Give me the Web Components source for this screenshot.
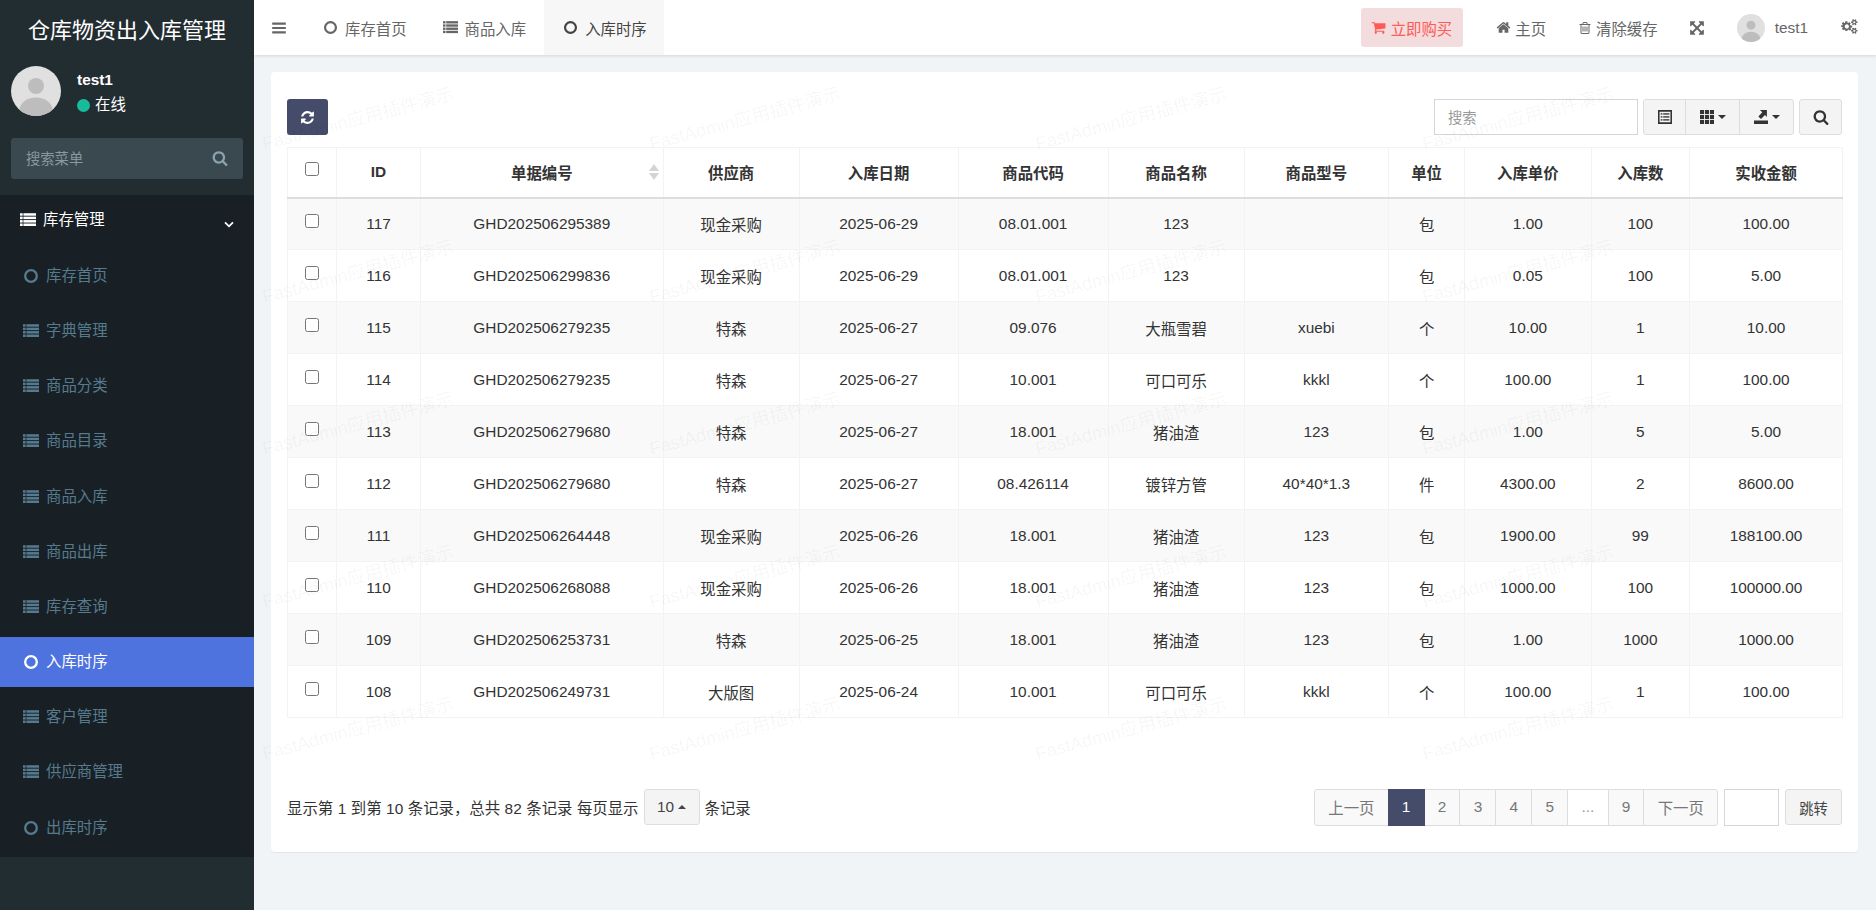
<!DOCTYPE html>
<html lang="zh-CN">
<head>
<meta charset="utf-8">
<title>仓库物资出入库管理</title>
<style>
  html, body { margin: 0; height: 100%; overflow: hidden; }
  body { font: 15.4px "Liberation Sans", "Noto Sans CJK SC", sans-serif; color: #333; background: #f1f4f6; }
</style>
</head>
<body>

<app-shell>
  <side-bar slot="side">
    <side-item icon="list" head chevron>库存管理</side-item>
    <side-item icon="circle">库存首页</side-item>
    <side-item icon="list">字典管理</side-item>
    <side-item icon="list">商品分类</side-item>
    <side-item icon="list">商品目录</side-item>
    <side-item icon="list">商品入库</side-item>
    <side-item icon="list">商品出库</side-item>
    <side-item icon="list">库存查询</side-item>
    <side-item icon="circle" active>入库时序</side-item>
    <side-item icon="list">客户管理</side-item>
    <side-item icon="list">供应商管理</side-item>
    <side-item icon="circle">出库时序</side-item>
  </side-bar>
  <top-nav slot="top"></top-nav>
  <stock-card>
    <table-toolbar></table-toolbar>
    <stock-table></stock-table>
    <table-pager></table-pager>
  </stock-card>
  <water-mark slot="over"></water-mark>
</app-shell>

<script>
(function() {

  // Font Awesome 4 shapes, 1792 grid unless the entry says otherwise
  const ICONS = {
    bars: '<rect x="128" y="288" width="1536" height="240" rx="40"/><rect x="128" y="776" width="1536" height="240" rx="40"/><rect x="128" y="1264" width="1536" height="240" rx="40"/>',
    list: [256, 640, 1024, 1408].map(y => `<rect x="0" y="${y - 120}" width="300" height="280"/><rect x="380" y="${y - 120}" width="1412" height="280"/>`).join(''),
    circle: '<circle cx="896" cy="896" r="650" fill="none" stroke="currentColor" stroke-width="260"/>',
    refresh: '<path d="M1639 1056q0 5-1 7-64 268-268 434.5T892 1664q-146 0-282.5-55T366 1452l-129 129q-19 19-45 19t-45-19-19-45v-448q0-26 19-45t45-19h448q26 0 45 19t19 45-19 45l-137 137q71 66 161 102t187 36q134 0 250-65t186-179q11-17 53-117 8-23 30-23h192q13 0 22.5 9.5t9.5 22.5zm25-800v448q0 26-19 45t-45 19h-448q-26 0-45-19t-19-45 19-45l138-138q-148-137-349-137-134 0-250 65T460 628q-11 17-53 117-8 23-30 23H178q-13 0-22.5-9.5T146 736v-7q65-268 270-434.5T896 128q146 0 284 55.5T1425 340l130-129q19-19 45-19t45 19 19 45z"/>',
    search: '<path d="M1216 832q0-185-131.5-316.5T768 384 451.5 515.5 320 832t131.5 316.5T768 1280t316.5-131.5T1216 832zm512 832q0 52-38 90t-90 38q-54 0-90-38l-343-342q-179 124-399 124-143 0-273.5-55.5t-225-150-150-225T64 832t55.5-273.5 150-225 225-150T768 128t273.5 55.5 225 150 150 225T1472 832q0 220-124 399l343 343q37 37 37 90z"/>',
    cart: '<path d="M704 1536q0 52-38 90t-90 38-90-38-38-90 38-90 90-38 90 38 38 90zm896 0q0 52-38 90t-90 38-90-38-38-90 38-90 90-38 90 38 38 90zm128-1088v512q0 24-16.5 42.5T1671 1024L627 1146q13 60 13 70 0 16-24 64h920q26 0 45 19t19 45-19 45-45 19H512q-26 0-45-19t-19-45q0-11 8-31.5t16-36 21.5-40T509 1207L332 384H128q-26 0-45-19t-19-45 19-45 45-19h256q16 0 28.5 6.5T432 278t13 24.5 8 26 5.5 29.5 4.5 26h1201q26 0 45 19t19 45z"/>',
    home: '<path d="M1472 992v480q0 26-19 45t-45 19h-384v-384H768v384H384q-26 0-45-19t-19-45V992q0-1 .5-3t.5-3l575-474 575 474q1 2 1 6zm223-69l-62 74q-8 9-21 11h-3q-13 0-21-7L896 424l-692 577q-12 8-24 7-13-2-21-11l-62-74q-8-10-7-23.5t11-21.5l719-599q32-26 76-26t76 26l244 204V288q0-14 9-23t23-9h192q14 0 23 9t9 23v408l219 182q10 8 11 21.5t-7 23.5z"/>',
    trash: '<path d="M704 736v576q0 14-9 23t-23 9h-64q-14 0-23-9t-9-23V736q0-14 9-23t23-9h64q14 0 23 9t9 23zm256 0v576q0 14-9 23t-23 9h-64q-14 0-23-9t-9-23V736q0-14 9-23t23-9h64q14 0 23 9t9 23zm256 0v576q0 14-9 23t-23 9h-64q-14 0-23-9t-9-23V736q0-14 9-23t23-9h64q14 0 23 9t9 23zm128 724V512H448v948q0 22 7 40.5t14.5 27 10.5 8.5h832q3 0 10.5-8.5t14.5-27 7-40.5zM672 384h448l-48-117q-7-9-17-11H738q-10 2-17 11zm928 32v64q0 14-9 23t-23 9h-96v948q0 83-47 143.5t-113 60.5H480q-66 0-113-58.5T320 1464V512h-96q-14 0-23-9t-9-23v-64q0-14 9-23t23-9h309l70-167q15-37 54-63t79-26h320q40 0 79 26t54 63l70 167h309q14 0 23 9t9 23z"/>',
    expand: '<path d="M1411 541l-355 355 355 355 144-144q29-31 70-14 39 17 39 59v448q0 26-19 45t-45 19h-448q-42 0-59-40-17-39 14-69l144-144-355-355-355 355 144 144q31 30 14 69-17 40-59 40H192q-26 0-45-19t-19-45v-448q0-42 40-59 39-17 69 14l144 144 355-355-355-355-144 144q-19 19-45 19-12 0-24-5-40-17-40-59V192q0-26 19-45t45-19h448q42 0 59 40 17 39-14 69L541 381l355 355 355-355-144-144q-31-30-14-69 17-40 59-40h448q26 0 45 19t19 45v448q0 42-39 59-13 5-25 5-26 0-45-19z"/>',
    cogs: '<path transform="scale(.875)" d="M960 896q0-106-75-181t-181-75-181 75-75 181 75 181 181 75 181-75 75-181zm768 512q0-52-38-90t-90-38-90 38-38 90q0 53 37.5 90.5T1600 1536t90.5-37.5T1728 1408zm0-1024q0-52-38-90t-90-38-90 38-38 90q0 53 37.5 90.5T1600 512t90.5-37.5T1728 384zm-384 421v185q0 10-7 19.5t-16 10.5l-155 24q-11 35-32 76 34 48 90 115 7 11 7 20 0 12-7 19-23 30-82.5 89.5T1004 1347q-11 0-21-7l-115-90q-37 19-77 31-11 108-23 155-7 24-30 24H552q-11 0-20-7.5t-10-17.5l-23-153q-34-10-75-31l-118 89q-7 7-20 7-11 0-21-8-144-133-144-160 0-9 7-19 10-14 41-53t47-61q-23-44-35-82l-152-24q-10-1-17-9.5T0 990V805q0-10 7-19.5T23 775l155-24q11-35 32-76-34-48-90-115-7-11-7-20 0-12 7-20 22-30 82-89t79-59q11 0 21 7l115 90q34-18 77-32 11-108 23-154 7-24 30-24h186q11 0 20 7.5t10 17.5l23 153q34 10 75 31l118-89q8-7 20-7 11 0 21 8 144 133 144 160 0 8-7 19-12 16-42 54t-45 60q23 48 34 82l152 23q10 2 17 10.5t7 19.5zm640 533v140q0 16-149 31-12 27-30 52 51 113 51 138 0 4-4 7-122 71-124 71-8 0-46-47t-52-68q-20 2-30 2t-30-2q-14 21-52 68t-46 47q-2 0-124-71-4-3-4-7 0-25 51-138-18-25-30-52-149-15-149-31v-140q0-16 149-31 13-29 30-52-51-113-51-138 0-4 4-7 4-2 35-20t59-34 30-16q8 0 46 46.5t52 67.5q20-2 30-2t30 2q51-71 92-112l6-2q4 0 124 70 4 3 4 7 0 25-51 138 17 23 30 52 149 15 149 31zm0-1024v140q0 16-149 31-12 27-30 52 51 113 51 138 0 4-4 7-122 71-124 71-8 0-46-47t-52-68q-20 2-30 2t-30-2q-14 21-52 68t-46 47q-2 0-124-71-4-3-4-7 0-25 51-138-18-25-30-52-149-15-149-31v-140q0-16 149-31 13-29 30-52-51-113-51-138 0-4 4-7 4-2 35-20t59-34 30-16q8 0 46 46.5t52 67.5q20-2 30-2t30 2q51-71 92-112l6-2q4 0 124 70 4 3 4 7 0 25-51 138 17 23 30 52 149 15 149 31z"/>',
    th: [0, 636, 1272].map(y => [0, 636, 1272].map(x => `<rect x="${x}" y="${y}" width="520" height="520"/>`).join('')).join(''),
    listalt: '<path fill-rule="evenodd" d="M0 0h1792v1792H0zM200 230v1332h1392V230z"/><rect x="340" y="420" width="230" height="170"/><rect x="660" y="420" width="800" height="170"/><rect x="340" y="800" width="230" height="170"/><rect x="660" y="800" width="800" height="170"/><rect x="340" y="1180" width="230" height="170"/><rect x="660" y="1180" width="800" height="170"/>',
    // tray with a heavy arrow leaving it towards the upper right
    export: '<path d="M0 1792v-450h1792v450z"/><path d="M760 0h890v900l-250-250-500 500-340-330 500-520z"/>',
    chevron: '<path d="M300 640l596 596 596-596" fill="none" stroke="currentColor" stroke-width="260"/>'
  };

  class FaIcon extends HTMLElement {
    connectedCallback() {
      const size = this.getAttribute('size') || 14;
      const body = ICONS[this.getAttribute('name')] || '';
      this.attachShadow({mode: 'open'}).innerHTML = `
        <style>:host{display:inline-flex;flex:none;line-height:0}svg{fill:currentColor;display:block}</style>
        <svg width="${size}" height="${size}" viewBox="0 0 1792 1792">${body}</svg>`;
    }
  }
  customElements.define('fa-icon', FaIcon);

  class UserAvatar extends HTMLElement {
    connectedCallback() {
      const size = this.getAttribute('size') || 50;
      this.attachShadow({mode: 'open'}).innerHTML = `
        <style>:host{display:block;flex:none;line-height:0}</style>
        <svg width="${size}" height="${size}" viewBox="0 0 50 50">
          <clipPath id="c"><circle cx="25" cy="25" r="25"/></clipPath>
          <g clip-path="url(#c)">
            <rect width="50" height="50" fill="#e0e0e0"/>
            <circle cx="25" cy="20" r="8" fill="#bdbdbd"/>
            <ellipse cx="25" cy="44" rx="16.5" ry="12.5" fill="#bdbdbd"/>
          </g>
        </svg>`;
    }
  }
  customElements.define('user-avatar', UserAvatar);

  class AppShell extends HTMLElement {
    connectedCallback() {
      this.attachShadow({mode: 'open'}).innerHTML = `
        <style>
          :host{display:grid;grid-template-columns:254px 1fr;grid-template-rows:55px 1fr;height:910px;position:relative;overflow:hidden}
          .side{grid-row:1 / 3;display:flex}
          .top{position:relative;z-index:1}
          main{padding:17px 18px 0 17px;min-width:0}
        </style>
        <div class="side"><slot name="side"></slot></div>
        <div class="top"><slot name="top"></slot></div>
        <main><slot></slot></main>
        <slot name="over"></slot>`;
    }
  }
  customElements.define('app-shell', AppShell);

  class SideBar extends HTMLElement {
    connectedCallback() {
      this.attachShadow({mode: 'open'}).innerHTML = `
        <style>
          :host{display:block;width:254px;background:#222d32;color:#fff}
          .brand{height:55px;display:flex;align-items:center;justify-content:center;font-size:22px;color:#fff}
          .user{display:flex;gap:16px;padding:11px 11px 0}
          .name{font-weight:bold;line-height:18px;margin-top:5px}
          .state{display:flex;align-items:center;gap:5px;margin-top:6px;line-height:20px}
          .dot{width:13px;height:13px;border-radius:50%;background:#18bc9c}
          .find{display:flex;align-items:center;justify-content:space-between;box-sizing:border-box;height:41px;margin:22px 11px 16px;padding:0 15px 2px;background:#3a4850;border-radius:3px;color:#8a979e;font-size:14.3px}
          .find fa-icon{color:#8aa4af}
          .menu{background:#182025;display:flow-root}
        </style>
        <div class="brand">仓库物资出入库管理</div>
        <div class="user">
          <user-avatar size="50"></user-avatar>
          <div>
            <div class="name">test1</div>
            <div class="state"><span class="dot"></span>在线</div>
          </div>
        </div>
        <div class="find"><span>搜索菜单</span><fa-icon name="search" size="16"></fa-icon></div>
        <div class="menu"><slot></slot></div>`;
    }
  }
  customElements.define('side-bar', SideBar);

  class SideItem extends HTMLElement {
    connectedCallback() {
      const icon = this.getAttribute('icon');
      const chevron = this.hasAttribute('chevron') ? '<fa-icon class="chev" name="chevron" size="12"></fa-icon>' : '';
      this.attachShadow({mode: 'open'}).innerHTML = `
        <style>
          :host{display:flex;align-items:center;box-sizing:border-box;height:50.2px;margin-bottom:5px;padding:1px 0 0 23px;color:#567a8e}
          :host([head]){color:#fff;padding:0 0 0 20px}
          :host([active]){background:#4e73df;color:#fff}
          .label{margin-left:7px;line-height:20px}
          fa-icon.ic{width:16px;justify-content:center}
          .chev{margin:8px 19px 0 auto;color:#fff}
        </style>
        <fa-icon class="ic" name="${icon}" size="16"></fa-icon>
        <span class="label"><slot></slot></span>
        ${chevron}`;
    }
  }
  customElements.define('side-item', SideItem);

  class TopNav extends HTMLElement {
    connectedCallback() {
      this.attachShadow({mode: 'open'}).innerHTML = `
        <style>
          :host{display:flex;align-items:stretch;height:55px;background:#fff;color:#666;box-shadow:0 1px 3px rgba(0,0,0,.12)}
          .burger{width:50px;display:flex;align-items:center;padding-left:17px;box-sizing:border-box}
          .tab{display:flex;align-items:center;padding:0 17px 0 19px;gap:7px}
          .tab.on{background:#f7f7f7;color:#444}
          .right{margin-left:auto;display:flex;align-items:center;padding-right:18px}
          .buy{display:flex;align-items:center;gap:5px;height:39px;padding:0 11px 0 10px;background:#f2dcde;color:#ff5a55;border-radius:3px}
          .link{display:flex;align-items:center;gap:4px}
        </style>
        <div class="burger"><fa-icon name="bars" size="16"></fa-icon></div>
        <div class="tab"><fa-icon name="circle" size="15"></fa-icon>库存首页</div>
        <div class="tab" style="padding-right:18px"><fa-icon name="list" size="15"></fa-icon>商品入库</div>
        <div class="tab on"><fa-icon name="circle" size="15"></fa-icon>入库时序</div>
        <div class="right">
          <div class="buy"><fa-icon name="cart" size="15"></fa-icon>立即购买</div>
          <div class="link" style="margin-left:33px"><fa-icon name="home" size="15"></fa-icon>主页</div>
          <div class="link" style="margin-left:32px"><fa-icon name="trash" size="14"></fa-icon>清除缓存</div>
          <div class="link" style="margin-left:31px"><fa-icon name="expand" size="16"></fa-icon></div>
          <div class="link" style="margin-left:32px;gap:10px"><user-avatar size="28"></user-avatar>test1</div>
          <div class="link" style="margin-left:33px"><fa-icon name="cogs" size="17"></fa-icon></div>
        </div>`;
    }
  }
  customElements.define('top-nav', TopNav);

  class StockCard extends HTMLElement {
    connectedCallback() {
      this.attachShadow({mode: 'open'}).innerHTML = `
        <style>
          :host{display:block;box-sizing:border-box;height:780px;padding:27px 16px 0;background:#fff;border-radius:4px;box-shadow:0 1px 1px rgba(0,0,0,.06)}
        </style>
        <slot></slot>`;
    }
  }
  customElements.define('stock-card', StockCard);

  class TableToolbar extends HTMLElement {
    connectedCallback() {
      this.attachShadow({mode: 'open'}).innerHTML = `
        <style>
          :host{display:flex;align-items:stretch;height:36px;margin-bottom:12px}
          .refresh{width:41px;display:flex;align-items:center;justify-content:center;background:#444c69;color:#fff;border-radius:3px}
          .search{margin-left:auto;width:204px;box-sizing:border-box;border:1px solid #d2d6de;padding:0 13px 2px;display:flex;align-items:center;color:#999;font-size:14.3px}
          .group{display:flex;margin-left:5px;background:#f4f4f4;border:1px solid #ddd;border-radius:3px;color:#333}
          .group div{display:flex;align-items:center;justify-content:center;gap:4px;box-sizing:border-box}
          .group div + div{border-left:1px solid #ddd}
          .caret{width:0;height:0;border-top:4.5px solid #333;border-left:4.5px solid transparent;border-right:4.5px solid transparent}
          .go{width:43px;margin-left:5px;box-sizing:border-box;display:flex;align-items:center;justify-content:center;background:#f4f4f4;border:1px solid #ddd;border-radius:3px;color:#333}
        </style>
        <div class="refresh"><fa-icon name="refresh" size="15"></fa-icon></div>
        <div class="search">搜索</div>
        <div class="group">
          <div style="width:41px"><fa-icon name="listalt" size="14"></fa-icon></div>
          <div style="width:54px"><fa-icon name="th" size="14"></fa-icon><span class="caret"></span></div>
          <div style="width:54px"><fa-icon name="export" size="14"></fa-icon><span class="caret"></span></div>
        </div>
        <div class="go"><fa-icon name="search" size="16"></fa-icon></div>`;
    }
  }
  customElements.define('table-toolbar', TableToolbar);

  const COLS = [49, 84, 242.6, 136, 159, 150, 136, 144.5, 76, 126.5, 98.5, 152.9];
  const HEAD = ['ID', '单据编号', '供应商', '入库日期', '商品代码', '商品名称', '商品型号', '单位', '入库单价', '入库数', '实收金额'];
  const ROWS = [
    ['117', 'GHD202506295389', '现金采购', '2025-06-29', '08.01.001', '123', '', '包', '1.00', '100', '100.00'],
    ['116', 'GHD202506299836', '现金采购', '2025-06-29', '08.01.001', '123', '', '包', '0.05', '100', '5.00'],
    ['115', 'GHD202506279235', '特森', '2025-06-27', '09.076', '大瓶雪碧', 'xuebi', '个', '10.00', '1', '10.00'],
    ['114', 'GHD202506279235', '特森', '2025-06-27', '10.001', '可口可乐', 'kkkl', '个', '100.00', '1', '100.00'],
    ['113', 'GHD202506279680', '特森', '2025-06-27', '18.001', '猪油渣', '123', '包', '1.00', '5', '5.00'],
    ['112', 'GHD202506279680', '特森', '2025-06-27', '08.426114', '镀锌方管', '40*40*1.3', '件', '4300.00', '2', '8600.00'],
    ['111', 'GHD202506264448', '现金采购', '2025-06-26', '18.001', '猪油渣', '123', '包', '1900.00', '99', '188100.00'],
    ['110', 'GHD202506268088', '现金采购', '2025-06-26', '18.001', '猪油渣', '123', '包', '1000.00', '100', '100000.00'],
    ['109', 'GHD202506253731', '特森', '2025-06-25', '18.001', '猪油渣', '123', '包', '1.00', '1000', '1000.00'],
    ['108', 'GHD202506249731', '大版图', '2025-06-24', '10.001', '可口可乐', 'kkkl', '个', '100.00', '1', '100.00']
  ];

  class StockTable extends HTMLElement {
    connectedCallback() {
      const check = '<input type="checkbox">';
      const sort = '<i class="sort"><b class="up"></b><b class="down"></b></i>';
      const head = HEAD.map((h, i) => `<th>${h}${i === 1 ? sort : ''}</th>`).join('');
      const body = ROWS.map(r => `<tr><td>${check}</td>${r.map(c => `<td>${c}</td>`).join('')}</tr>`).join('');
      this.attachShadow({mode: 'open'}).innerHTML = `
        <style>
          :host{display:block}
          table{border-collapse:collapse;table-layout:fixed;width:1555px;text-align:center;color:#333}
          th,td{border:1px solid #f2f3f4;padding:0;position:relative}
          thead tr{height:50px}
          tbody tr{height:52px}
          th{font-weight:bold;border-bottom:2.5px solid #ddd}
          tbody tr:nth-child(odd){background:#f9f9f9}
          input{width:14px;height:14px;margin:0 0 6px;vertical-align:middle}
          .sort{position:absolute;right:4px;top:50%;margin-top:-8px;display:flex;flex-direction:column;gap:2px}
          .sort b{width:0;height:0;border-left:5.5px solid transparent;border-right:5.5px solid transparent}
          .up{border-bottom:7px solid #d4d4d4}
          .down{border-top:7px solid #d4d4d4}
        </style>
        <table>
          <colgroup>${COLS.map(w => `<col style="width:${w}px">`).join('')}</colgroup>
          <thead><tr><th>${check}</th>${head}</tr></thead>
          <tbody>${body}</tbody>
        </table>`;
    }
  }
  customElements.define('stock-table', StockTable);

  class TablePager extends HTMLElement {
    connectedCallback() {
      const pages = ['上一页', '1', '2', '3', '4', '5', '...', '9', '下一页'];
      const links = pages.map(p => `<a class="${p === '1' ? 'on' : p === '...' ? 'gap' : ''}">${p}</a>`).join('');
      this.attachShadow({mode: 'open'}).innerHTML = `
        <style>
          :host{display:flex;align-items:center;height:38px;margin-top:70px;color:#333}
          .info{word-spacing:.25px}
          .size{display:flex;align-items:center;justify-content:center;gap:4px;width:56px;height:36px;box-sizing:border-box;margin:0 5px;background:#f4f4f4;border:1px solid #ddd;border-radius:3px;color:#444}
          .caret{width:0;height:0;border-bottom:4.5px solid #444;border-left:4.5px solid transparent;border-right:4.5px solid transparent}
          .pages{margin-left:auto;display:flex;height:37px;color:#777}
          a{display:flex;align-items:center;padding:0 13.2px;background:#f9f9f9;border:1px solid #ddd;margin-left:-1px}
          a:first-child{margin-left:0;border-radius:3px 0 0 3px}
          a:last-child{border-radius:0 3px 3px 0}
          a.on{background:#444c69;border-color:#444c69;color:#fff;position:relative}
          a.gap{background:#fff;color:#999}
          .jump{width:55px;height:37px;box-sizing:border-box;margin-left:6px;border:1px solid #d2d6de;background:#fff}
          .go{width:57px;height:36px;box-sizing:border-box;margin-left:6px;display:flex;align-items:center;justify-content:center;background:#f4f4f4;border:1px solid #ddd;border-radius:3px;color:#444;font-size:14.3px}
        </style>
        <span class="info">显示第 1 到第 10 条记录，总共 82 条记录 每页显示</span>
        <div class="size">10<span class="caret"></span></div>
        <span>条记录</span>
        <div class="pages">${links}</div>
        <div class="jump"></div>
        <div class="go">跳转</div>`;
    }
  }
  customElements.define('table-pager', TablePager);

  // the faint tiled stamp that lies over the whole content area
  class WaterMark extends HTMLElement {
    connectedCallback() {
      let marks = '';
      for (let row = 0; row < 5; row++) {
        for (let col = 0; col < 4; col++) {
          marks += `<span style="left:${266 + col * 386.7}px;top:${132 + row * 152.5}px">FastAdmin应用插件演示</span>`;
        }
      }
      this.attachShadow({mode: 'open'}).innerHTML = `
        <style>
          :host{position:absolute;inset:0;pointer-events:none;z-index:2}
          span{position:absolute;font-size:18.3px;line-height:24px;white-space:nowrap;color:rgba(0,0,0,.045);transform:rotate(-15deg);transform-origin:0 100%}
        </style>
        ${marks}`;
    }
  }
  customElements.define('water-mark', WaterMark);

})();
</script>
</body>
</html>
